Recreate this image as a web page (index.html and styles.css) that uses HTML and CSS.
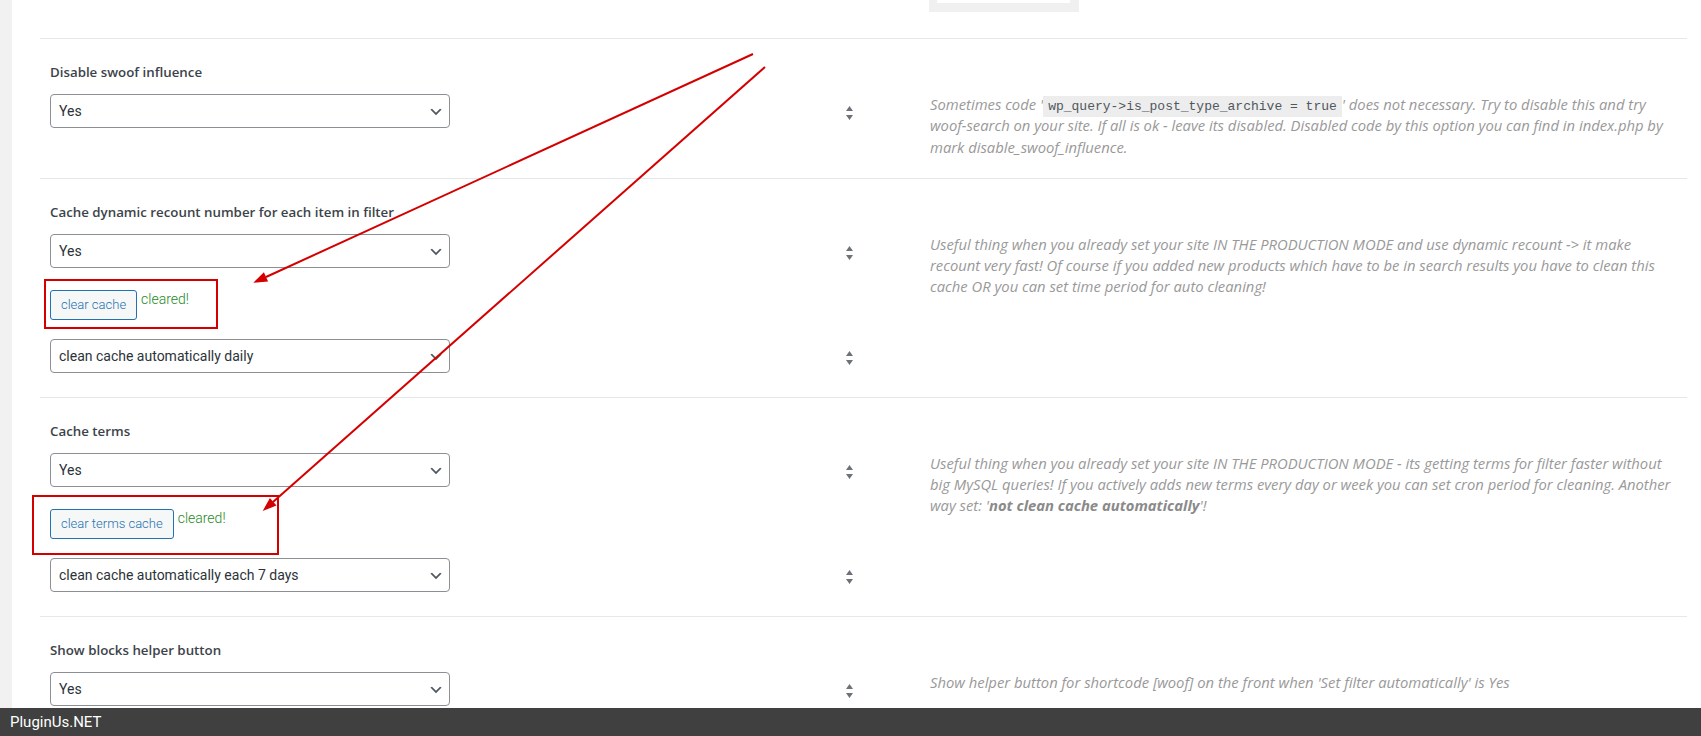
FILE: index.html
```html
<!DOCTYPE html>
<html lang="en">
<head>
    <meta charset="UTF-8">
    <meta name="viewport" content="width=device-width, initial-scale=1.0">
    <title>WOOF options</title>
    <link rel="stylesheet" href="styles.css">
</head>
<body>
    <div class="panel">
        <div class="stub">
            <div class="stub-box"><div class="stub-inner"></div></div>
        </div>

        <div class="option">
            <h4 class="label">Disable swoof influence</h4>
            <div class="controls">
                <div class="line">
                    <div class="select"><span>Yes</span><svg class="chev" width="16" height="16" viewBox="0 0 20 20"><path d="M5 6l5 5 5-5 2 1-7 7-7-7 2-1z" fill="#50575e"/></svg></div>
                    <svg class="sort" width="7" height="14" viewBox="0 0 7 14"><path d="M3.5 0L7 5H0z M0 9h7l-3.5 5z" fill="#6d7178"/></svg>
                </div>
            </div>
            <p class="desc">Sometimes code '<code>wp_query-&gt;is_post_type_archive = true</code>' does not necessary. Try to disable this and try woof-search on your site. If all is ok - leave its disabled. Disabled code by this option you can find in index.php by mark disable_swoof_influence.</p>
        </div>

        <div class="option">
            <h4 class="label">Cache dynamic recount number for each item in filter</h4>
            <div class="controls">
                <div class="line">
                    <div class="select"><span>Yes</span><svg class="chev" width="16" height="16" viewBox="0 0 20 20"><path d="M5 6l5 5 5-5 2 1-7 7-7-7 2-1z" fill="#50575e"/></svg></div>
                    <svg class="sort" width="7" height="14" viewBox="0 0 7 14"><path d="M3.5 0L7 5H0z M0 9h7l-3.5 5z" fill="#6d7178"/></svg>
                </div>
                <div class="btn-line">
                    <button class="btn">clear cache</button>
                    <span class="cleared">cleared!</span>
                </div>
                <div class="line after-btn">
                    <div class="select"><span>clean cache automatically daily</span><svg class="chev" width="16" height="16" viewBox="0 0 20 20"><path d="M5 6l5 5 5-5 2 1-7 7-7-7 2-1z" fill="#50575e"/></svg></div>
                    <svg class="sort" width="7" height="14" viewBox="0 0 7 14"><path d="M3.5 0L7 5H0z M0 9h7l-3.5 5z" fill="#6d7178"/></svg>
                </div>
            </div>
            <p class="desc">Useful thing when you already set your site IN THE PRODUCTION MODE and use dynamic recount -&gt; it make recount very fast! Of course if you added new products which have to be in search results you have to clean this cache OR you can set time period for auto cleaning!</p>
        </div>

        <div class="option">
            <h4 class="label">Cache terms</h4>
            <div class="controls">
                <div class="line">
                    <div class="select"><span>Yes</span><svg class="chev" width="16" height="16" viewBox="0 0 20 20"><path d="M5 6l5 5 5-5 2 1-7 7-7-7 2-1z" fill="#50575e"/></svg></div>
                    <svg class="sort" width="7" height="14" viewBox="0 0 7 14"><path d="M3.5 0L7 5H0z M0 9h7l-3.5 5z" fill="#6d7178"/></svg>
                </div>
                <div class="btn-line">
                    <button class="btn">clear terms cache</button>
                    <span class="cleared">cleared!</span>
                </div>
                <div class="line after-btn">
                    <div class="select"><span>clean cache automatically each 7 days</span><svg class="chev" width="16" height="16" viewBox="0 0 20 20"><path d="M5 6l5 5 5-5 2 1-7 7-7-7 2-1z" fill="#50575e"/></svg></div>
                    <svg class="sort" width="7" height="14" viewBox="0 0 7 14"><path d="M3.5 0L7 5H0z M0 9h7l-3.5 5z" fill="#6d7178"/></svg>
                </div>
            </div>
            <p class="desc">Useful thing when you already set your site IN THE PRODUCTION MODE - its getting terms for filter faster without big MySQL queries! If you actively adds new terms every day or week you can set cron period for cleaning. Another way set: '<strong>not clean cache automatically</strong>'!</p>
        </div>

        <div class="option">
            <h4 class="label">Show blocks helper button</h4>
            <div class="controls">
                <div class="line">
                    <div class="select"><span>Yes</span><svg class="chev" width="16" height="16" viewBox="0 0 20 20"><path d="M5 6l5 5 5-5 2 1-7 7-7-7 2-1z" fill="#50575e"/></svg></div>
                    <svg class="sort" width="7" height="14" viewBox="0 0 7 14"><path d="M3.5 0L7 5H0z M0 9h7l-3.5 5z" fill="#6d7178"/></svg>
                </div>
            </div>
            <p class="desc">Show helper button for shortcode [woof] on the front when 'Set filter automatically' is Yes</p>
        </div>
    </div>

    <!-- red annotation marks drawn over the screenshot -->
    <svg class="marks" width="1701" height="736" viewBox="0 0 1701 736">
        <g stroke="#d40000" stroke-width="2" fill="none">
            <line x1="753" y1="54" x2="266" y2="277"/>
            <line x1="765" y1="67" x2="273" y2="502"/>
            <rect x="45" y="280" width="172" height="48"/>
            <rect x="33" y="496" width="245" height="58"/>
        </g>
        <g fill="#d40000">
            <polygon points="253.3,282.7 268.1,281.4 263.9,272.3"/>
            <polygon points="262.7,511 276.5,505.5 269.9,498"/>
        </g>
    </svg>

    <div class="footer">PluginUs.NET</div>
</body>
</html>
```

FILE: styles.css
```css
* {
    box-sizing: border-box;
}
html, body {
    margin: 0;
    padding: 0;
    overflow: hidden;
}
body {
    background-color: #f1f1f1;
    font-family: Roboto, sans-serif;
}
.panel {
    margin-left: 12px;
    min-height: 100vh;
    background-color: #fff;
    padding: 0 14px 0 28px;
}
.stub {
    height: 38px;
}
.stub-box {
    width: 150px;
    height: 12px;
    margin-left: 889px;
    background-color: #f0f0f1;
    padding: 0 9px 0 8px;
}
.stub-inner {
    height: 3px;
    background-color: #fff;
}
.option {
    display: grid;
    grid-template-columns: 803px 1fr;
    column-gap: 77px;
    border-top: 1px solid #e3e8ec;
    padding: 24px 5px 20px 10px;
}
.label {
    grid-column: 1;
    margin: 0 0 13px;
    font-family: "Open Sans", sans-serif;
    font-weight: 600;
    font-size: 13.3px;
    line-height: 18px;
    color: #3c434a;
}
.controls {
    grid-column: 1;
    grid-row: 2;
    margin-bottom: 4px;
}
.line {
    display: flex;
    align-items: center;
    justify-content: space-between;
}
.line.after-btn {
    margin-top: 19px;
}
.select {
    width: 400px;
    height: 34px;
    display: flex;
    align-items: center;
    justify-content: space-between;
    padding: 0 5px 0 8px;
    border: 1px solid #8c8f94;
    border-radius: 4px;
    font-size: 14px;
    color: #2c3338;
}
.chev {
    margin-top: 2px;
}
.sort {
    margin-top: 4px;
}
.btn-line {
    display: flex;
    align-items: flex-start;
    margin-top: 22px;
}
.btn {
    height: 30px;
    padding: 0 10px;
    border: 1px solid #2271b1;
    border-radius: 3px;
    background-color: #f6f7f7;
    color: #2271b1;
    font-family: Roboto, sans-serif;
    font-weight: 300;
    font-size: 13px;
    line-height: 28px;
}
.cleared {
    margin-left: 4px;
    font-size: 14px;
    font-weight: 300;
    line-height: 19px;
    color: #1e8a1e;
}
.desc {
    grid-column: 2;
    grid-row: 2;
    margin: 0;
    font-family: "Open Sans", sans-serif;
    font-style: italic;
    font-size: 14.8px;
    line-height: 21.3px;
    color: #999;
}
.desc code {
    font-family: "Liberation Mono", monospace;
    font-style: normal;
    font-size: 13px;
    line-height: 1;
    padding: 3px 5px 3px;
    background-color: #ededed;
    color: #50575e;
}
.desc strong {
    color: #8a8a8a;
}
.marks {
    position: absolute;
    top: 0;
    left: 0;
    pointer-events: none;
}
.footer {
    position: fixed;
    left: 0;
    right: 0;
    bottom: 0;
    height: 28px;
    padding-left: 10px;
    background-color: #404040;
    color: #fff;
    font-family: Roboto, sans-serif;
    font-size: 15px;
    line-height: 28px;
}
```
